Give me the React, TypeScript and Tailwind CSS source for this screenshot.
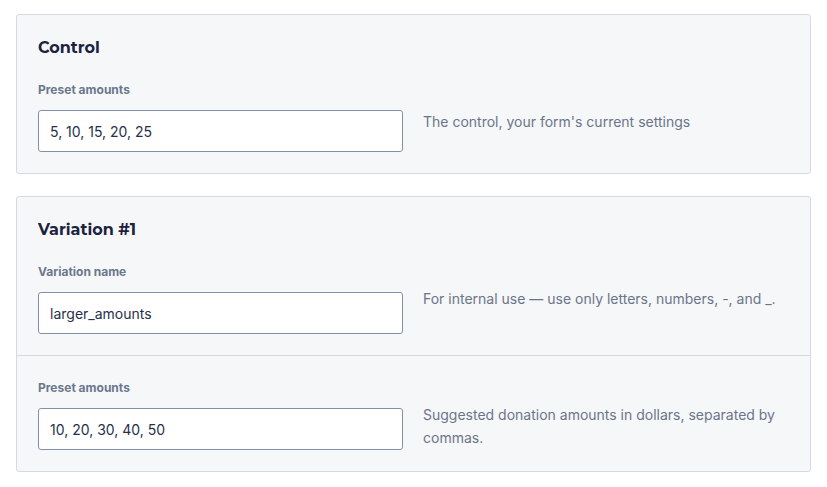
const Field = ({
  label,
  value,
  help,
  divided,
  helpTop,
}: {
  label: string;
  value: string;
  help: string;
  divided?: boolean;
  helpTop: string;
}) => {
  return (
    <div className={`px-[21px] pb-[21px] ${divided ? 'border-t border-[#d4d9e2] pt-6' : 'pt-[22px]'}`}>
      <div className="grid grid-cols-[365px_1fr] gap-x-5">
        <div>
          <label className="block text-[12px] leading-4 font-bold text-[#6b778c] mb-3">{label}</label>
          <input
            readOnly
            value={value}
            className="block w-[365px] h-[42px] rounded-[3px] border border-[#8391a7] bg-white px-[11px] text-[14px] text-[#27304a] outline-none"
          />
        </div>
        <p className={`${helpTop} text-[14px] leading-[23px] text-[#6b7589] pr-2`}>{help}</p>
      </div>
    </div>
  );
};

const Card = ({ title, children }: { title: string; children: React.ReactNode }) => {
  return (
    <section className="rounded-[3px] border border-[#d4d9e2] bg-[#f6f7f9]">
      <h2
        className="px-[21px] pt-[21px] text-[16px] leading-6 font-bold text-[#1a2240]"
        style={{ fontFamily: 'Montserrat, Lato, "Open Sans", sans-serif' }}
      >
        {title}
      </h2>
      {children}
    </section>
  );
};

export default function App() {
  return (
    <div
      className="min-h-[487px] w-[827px] bg-white px-4 pt-[14px] flex flex-col gap-[22px]"
      style={{ fontFamily: 'Inter, "Noto Sans", sans-serif' }}
    >
      <Card title="Control">
        <Field
          helpTop="pt-7"
          label="Preset amounts"
          value="5, 10, 15, 20, 25"
          help="The control, your form's current settings"
        />
      </Card>
      <Card title="Variation #1">
        <Field
          helpTop="pt-[23px]"
          label="Variation name"
          value="larger_amounts"
          help="For internal use — use only letters, numbers, -, and _."
        />
        <Field
          divided
          helpTop="pt-[23px]"
          label="Preset amounts"
          value="10, 20, 30, 40, 50"
          help="Suggested donation amounts in dollars, separated by commas."
        />
      </Card>
    </div>
  );
}
